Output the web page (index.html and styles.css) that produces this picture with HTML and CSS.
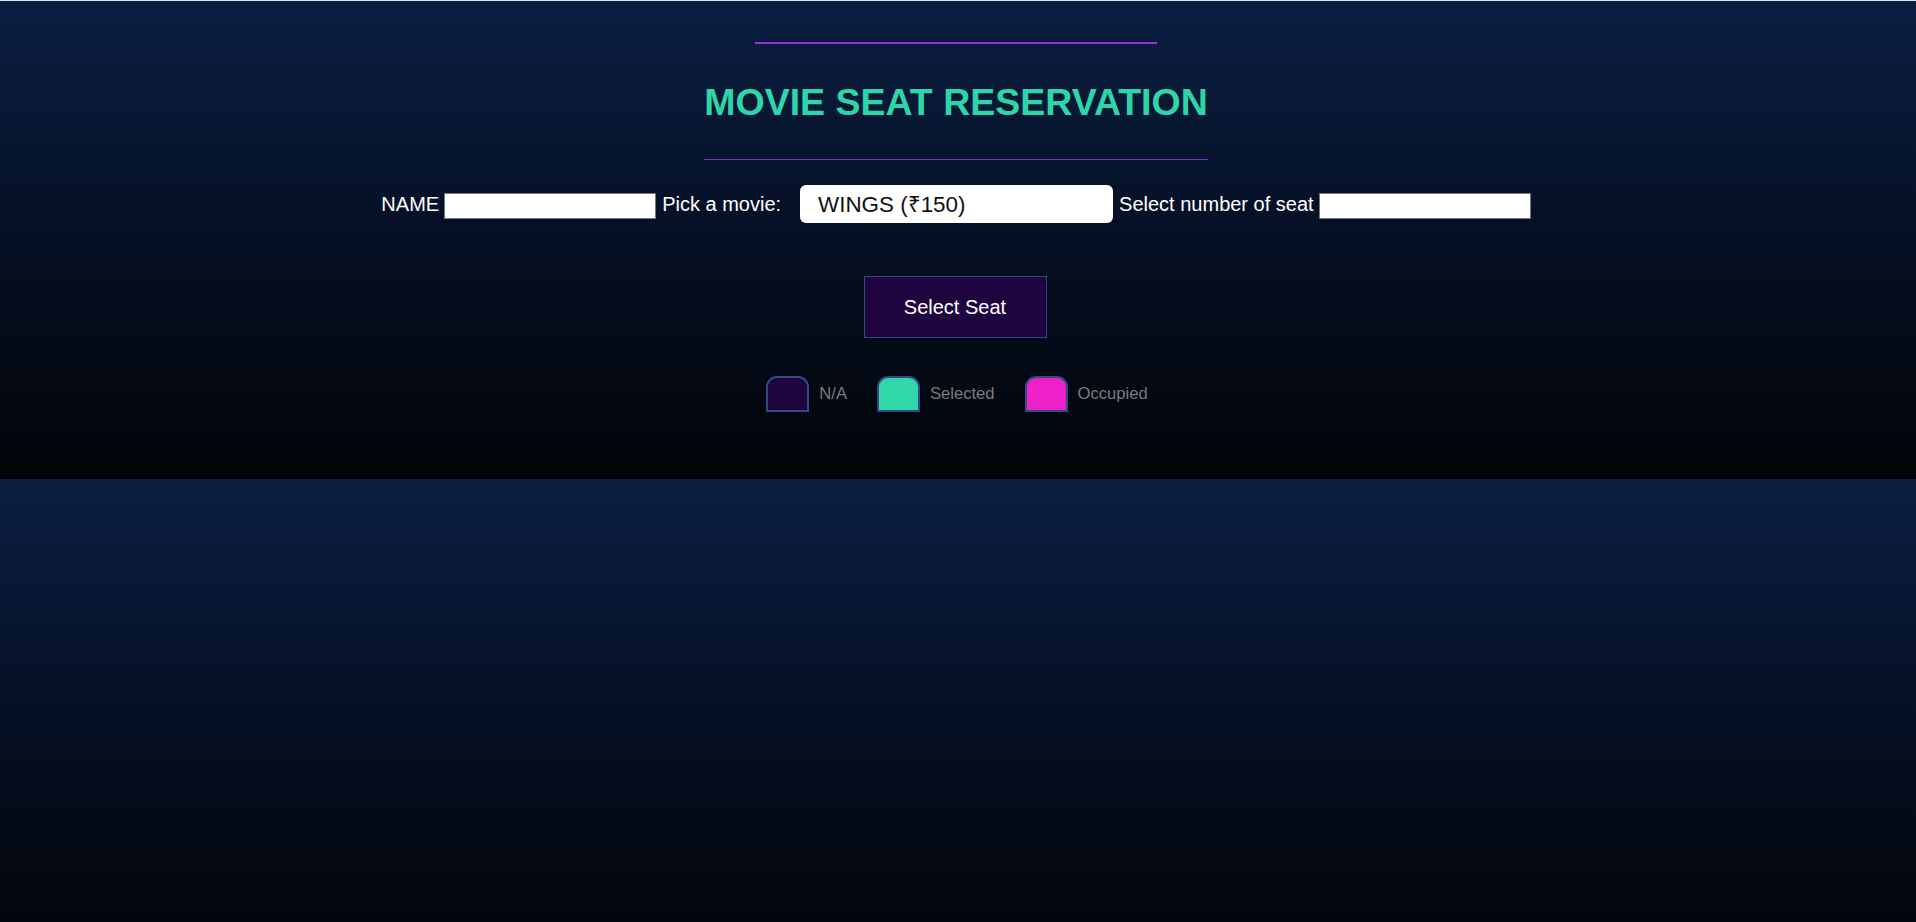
FILE: index.html
```html
<!DOCTYPE html>
<html lang="en">
<head>
<meta charset="utf-8">
<title>Movie Seat Reservation</title>
<link rel="stylesheet" href="styles.css">
</head>
<body>
<div class="page">
  <header class="title-block">
    <div class="top-rule"></div>
    <h1 class="title">MOVIE SEAT RESERVATION</h1>
  </header>

  <form class="form-row" onsubmit="return false">
    <label class="field-label" for="name">NAME</label>
    <input class="text-input" id="name" type="text">
    <label class="field-label label-movie" for="movie">Pick a movie:</label>
    <select class="movie-select" id="movie">
      <option>WINGS (₹150)</option>
      <option>THE LION KING (₹120)</option>
      <option>INCEPTION (₹180)</option>
    </select>
    <label class="field-label label-seats" for="seats">Select number of seat</label>
    <input class="text-input" id="seats" type="number">
  </form>

  <button class="select-btn" type="button">Select Seat</button>

  <ul class="legend">
    <li class="legend-item"><span class="seat seat-na"></span><small class="legend-text">N/A</small></li>
    <li class="legend-item"><span class="seat seat-selected"></span><small class="legend-text">Selected</small></li>
    <li class="legend-item"><span class="seat seat-occupied"></span><small class="legend-text">Occupied</small></li>
  </ul>
</div>
</body>
</html>
```

FILE: styles.css
```css
* {
  box-sizing: border-box;
}

html {
  min-height: 100%;
  background-color: #020306;
  background-image:
    linear-gradient(#e3e3e3, #e3e3e3),
    linear-gradient(to bottom, #0b1e42 0%, #061127 45%, #020407 100%);
  background-size: 100% 1px, 100% 478px;
  background-position: 0 0, 0 1px;
  background-repeat: no-repeat, repeat-y;
}

body {
  margin: 0;
  font-family: "Liberation Sans", Arial, sans-serif;
  color: #ffffff;
}

.page {
  height: 479px;
  padding-top: 42px;
  padding-right: 2px;
  display: flex;
  flex-direction: column;
  align-items: center;
}

.title-block {
  display: flex;
  flex-direction: column;
  align-items: center;
  margin-right: 2px;
}

.top-rule {
  width: 80%;
  height: 2px;
  background: #9431d2;
}

.title {
  margin: 37px 0 0;
  padding: 0 0 36px;
  font-size: 37.5px;
  font-weight: 700;
  line-height: 42px;
  color: #2dd5a8;
  border-bottom: 1px solid #8030c4;
}

.form-row {
  margin-top: 25px;
  margin-right: 2px;
  display: flex;
  align-items: center;
  height: 38px;
}

.field-label {
  font-size: 20px;
  line-height: 24px;
  color: #ffffff;
}

.text-input {
  width: 212px;
  height: 26px;
  margin: 4px 6px 0 5px;
  padding: 1px 3px;
  border: 1px solid #767676;
  border-radius: 0;
  background: #ffffff;
  font-family: "Liberation Sans", Arial, sans-serif;
  font-size: 16px;
  outline: none;
}

#seats {
  margin-left: 5px;
  margin-right: 0;
}

.movie-select {
  -webkit-appearance: none;
  appearance: none;
  width: 313px;
  height: 38px;
  margin-left: 19px;
  margin-right: 6px;
  padding: 0 18px;
  border: none;
  border-radius: 6px;
  background: #ffffff;
  color: #111111;
  font-family: "Liberation Sans", Arial, sans-serif;
  font-size: 22.4px;
  outline: none;
}

.select-btn {
  margin-top: 53px;
  margin-right: 4px;
  width: 183px;
  height: 62px;
  border: 1px solid #34468a;
  border-radius: 0;
  background: #1e0540;
  color: #ffffff;
  font-family: "Liberation Sans", Arial, sans-serif;
  font-size: 20px;
  cursor: pointer;
}

.legend {
  list-style: none;
  margin: 38px 0 0;
  padding: 0;
  display: flex;
  align-items: center;
  gap: 30px;
}

.legend-item {
  display: flex;
  align-items: center;
  gap: 10px;
}

.seat {
  display: block;
  width: 43px;
  height: 36px;
  border: 2px solid #2f4a86;
  border-radius: 11px 11px 0 0;
}

.seat-na {
  background: #1e0540;
}

.seat-selected {
  background: #31d6a9;
}

.seat-occupied {
  background: #ee20c8;
}

.legend-text {
  font-size: 16.6px;
  color: #7a7a7a;
}
```
